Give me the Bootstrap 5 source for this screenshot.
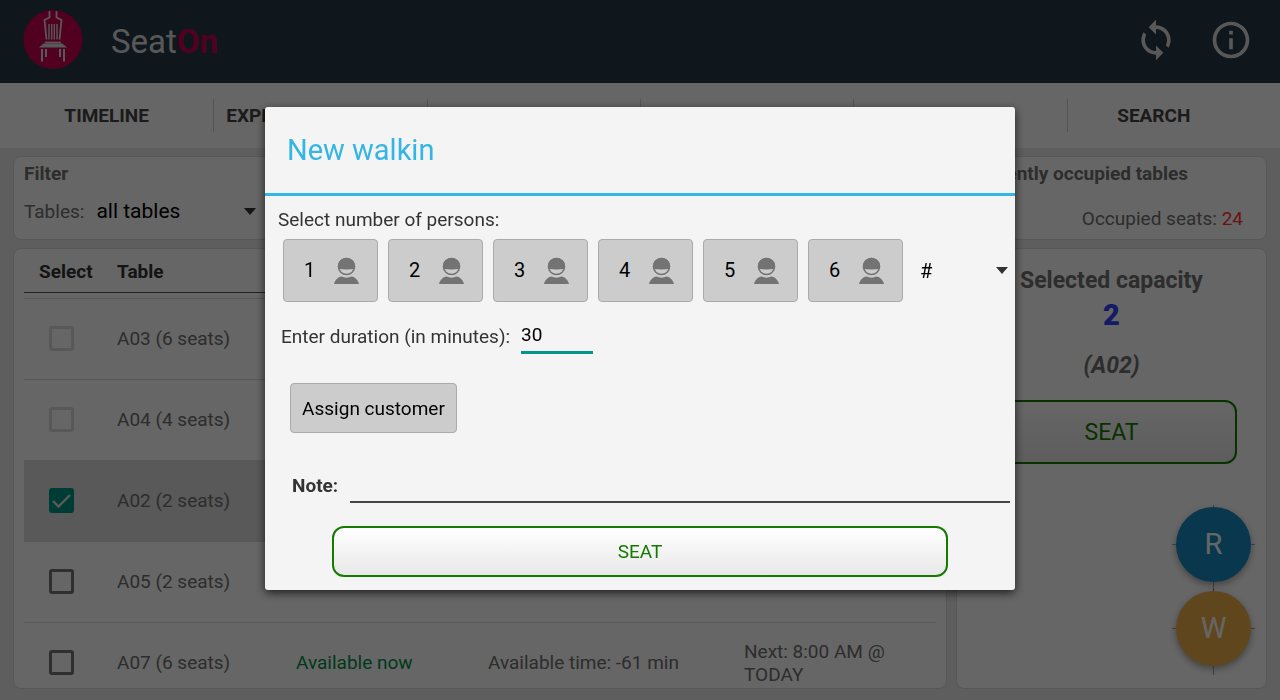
<!DOCTYPE html>
<html lang="en">
<head>
<meta charset="utf-8">
<meta name="viewport" content="width=device-width, initial-scale=1">
<title>SeatOn – New walkin</title>
<link href="https://cdn.jsdelivr.net/npm/bootstrap@5.3.0/dist/css/bootstrap.min.css" rel="stylesheet">
<style>
  body { font-family: Roboto, sans-serif; font-size: 19px; line-height: 23px; color: #707070; background: #ebebeb; }
  .topbar { background: #263946; height: 83px; padding: 0 27px 4px 23px; color: #dcdcdc; }
  .brand-name { font-size: 33px; line-height: 40px; margin-left: 28px; padding-top: 4px; }
  .brand-name b { color: #c80050; }
  .icon-btn { background: none; border: 0; padding: 0; color: #dcdcdc; line-height: 0; }
  .tabs { background: #fff; height: 65px; padding: 16px 0; }
  .tab-link { color: #444; font-weight: 700; text-decoration: none; line-height: 34px; text-align: center; white-space: nowrap; border-left: 1px solid #d4d4d4; }
  .tab-link:first-child { border-left: 0; }
  .tab-link:last-child { padding-right: 40px; }
  .content-area { padding: 8px 13px 11px; gap: 8px; min-height: 0; }
  .panel { background: #fff; border: 1px solid #dadada; border-radius: 8px; padding: 5px 10px; overflow: hidden; }
  .panel-title { font-size: 19px; line-height: 23px; font-weight: 700; margin: 0; }
  .filter-panel, .occupied-panel { height: 84px; }
  .occupied-panel .panel-title { padding-right: 68px; }
  .occupied-line { margin-top: 22px; padding-right: 13px; }
  .occupied-line span { color: #ff3333; }
  .side-panel { width: 311px; padding: 17px 15px 22px 29px; }
  .panels { gap: 9px; min-height: 0; }
  .plain-select { border: 0; background-color: transparent; --bs-form-select-bg-img: url("data:image/svg+xml,%3csvg xmlns='http://www.w3.org/2000/svg' viewBox='0 0 12 7'%3e%3cpath fill='%23333' d='M0 0h12L6 7z'/%3e%3c/svg%3e"); background-image: var(--bs-form-select-bg-img); background-size: 12px 7px; background-position: right 2px center; padding: 0 20px 0 0; color: #000; }
  .filter-select { font-size: 21px; line-height: 30px; width: 162px; margin-left: 12px; }
  .filter-row { margin-top: 11px; }
  .seat-table { table-layout: fixed; width: 100%; }
  .seat-table th { color: #333; height: 38px; padding-bottom: 3px; border-bottom: 1px solid #555; font-weight: 700; }
  .seat-table th:first-child { padding-left: 15px; }
  .seat-table tbody tr { height: 81px; border-top: 1px solid #dcdcdc; }
  .seat-table tbody tr.spacer-row { height: 6px; border: 0; }
  .seat-table .picked { background: #dedede; }
  .col-pick { width: 92px; } .col-name { width: 179px; } .col-state { width: 192px; } .col-time { width: 256px; }
  .tick { appearance: none; display: block; width: 25px; height: 25px; margin: 0 0 0 24px; border: 3px solid #757575; border-radius: 3px; }
  .tick:disabled { border-color: #dcdcdc; }
  .tick:checked { border-color: #009688; background: #009688 url("data:image/svg+xml,%3csvg xmlns='http://www.w3.org/2000/svg' viewBox='0 0 19 19'%3e%3cpath fill='none' stroke='%23e0e0e0' stroke-width='2.4' d='M1 10l5.500 5.500L18 4'/%3e%3c/svg%3e") center / 19px 19px no-repeat; }
  .free { color: #008f47; }
  .seat-btn { border: 2px solid #157b00; border-radius: 12px; background: linear-gradient(#fff, #e8e8e8); color: #157b00; }
  .side-panel .seat-btn { height: 64px; width: 251px; font-size: 23px; margin-top: 20px; }
  .capacity { font-size: 23px; line-height: 29px; font-weight: 700; }
  .capacity strong { font-size: 29px; line-height: 40px; color: #3341ff; }
  .side-text { width: 251px; text-align: center; }
  .fab { position: relative; width: 75px; height: 75px; border: 0; border-radius: 50%; color: #fff; font-size: 29px; box-shadow: 0 3px 7px rgba(0,0,0,.35); }
  .fab-r { background: #148ac2; } .fab-w { background: #eeb04a; }
  .fab::before, .fab::after { content: ""; position: absolute; z-index: -1; background: rgba(0,0,0,.35); }
  .fab::before { width: 1px; left: 37px; top: -2px; bottom: -9px; }
  .fab::after { height: 1px; top: 37px; left: -4px; right: -4px; }
  .fab-stack { gap: 9px; position: relative; z-index: 0; }
  .modal-backdrop { --bs-backdrop-opacity: .6; }
  .walkin { --bs-modal-width: 750px; }
  .walkin .modal-content { background: #f4f4f4; border: 0; border-radius: 3px; box-shadow: 0 3px 10px rgba(0,0,0,.7); color: #333; margin-bottom: 3px; }
  .walkin .modal-header { padding: 0 22px; height: 89px; border-bottom: 3px solid #33b5e5; border-radius: 0; }
  .walkin .modal-title { font-size: 29px; line-height: 36px; font-weight: 400; color: #33b5e5; }
  .walkin .modal-body { padding: 12px 5px 13px 13px; }
  .persons { gap: 10px; padding-left: 5px; margin-top: 8px; }
  .grey-btn { background: #ccc; border: 1px solid #aaa; border-radius: 4px; color: #000; }
  .person-btn { width: 95px; height: 63px; font-size: 20px; padding: 0 18px 0 20px; }
  .count-select { font-size: 20px; flex: 1; min-width: 0; padding-left: 7px; }
  .line-input { border: 0; background: transparent; padding: 0; outline: 0; height: 36px; color: #000; }
  .duration { width: 72px; border-bottom: 3px solid #009688; }
  .duration-row { margin: 16px 0 0 3px; gap: 11px; }
  .assign-btn { height: 50px; width: 167px; margin: 29px 0 0 12px; }
  .note-row { margin: 34px 0 0 14px; gap: 12px; }
  .note-input { border-bottom: 2px solid #444; }
  .modal-body .seat-btn { height: 51px; margin: 23px 62px 0 54px; }
</style>
</head>
<body>
<div class="d-flex flex-column vh-100 overflow-hidden">
  <header class="topbar d-flex align-items-center flex-shrink-0">
    <svg width="60" height="60" viewBox="0 0 60 60" aria-hidden="true">
      <circle cx="30" cy="29.500" r="29.500" fill="#cc0050"/>
      <g fill="none" stroke="#dcdcdc" stroke-width="1.800">
        <path d="M26.500 1v6.500l-5 2.500 2 19.500M33.500 1v6.500l5 2.500-2 19.500"/>
        <path d="M26 14v15.500M28.700 14v15.500M31.300 14v15.500M34 14v15.500" stroke-width="1.400"/>
        <path d="M22 32.500h16"/>
        <path d="M18.500 36.500l2.500-2h18l2.500 2z"/>
        <path d="M19 39v12.500M41 39v12.500M23 39v8M37 39v8" stroke-width="2"/>
      </g>
    </svg>
    <span class="brand-name">Seat<b>On</b></span>
    <div class="ms-auto d-flex" style="gap:31px">
      <button class="icon-btn" type="button" aria-label="Refresh"><svg width="44" height="44" viewBox="0 0 24 24" fill="currentColor"><path d="M12 4V1L8 5l4 4V6c3.310 0 6 2.690 6 6 0 1.010-.25 1.970-.7 2.800l1.460 1.460C19.540 15.030 20 13.570 20 12c0-4.420-3.580-8-8-8zm0 14c-3.310 0-6-2.690-6-6 0-1.010.25-1.970.7-2.800L5.240 7.740C4.460 8.970 4 10.430 4 12c0 4.420 3.580 8 8 8v3l4-4-4-4v3z"/></svg></button>
      <button class="icon-btn" type="button" aria-label="Info"><svg width="44" height="44" viewBox="0 0 24 24" fill="currentColor"><path d="M11 17h2v-6h-2v6zm1-15C6.480 2 2 6.480 2 12s4.480 10 10 10 10-4.480 10-10S17.520 2 12 2zm0 18c-4.410 0-8-3.590-8-8s3.590-8 8-8 8 3.590 8 8-3.590 8-8 8zM11 9h2V7h-2v2z"/></svg></button>
    </div>
  </header>
  <nav class="tabs d-flex flex-shrink-0" aria-label="Sections">
    <a class="tab-link col-2" href="#">TIMELINE</a>
    <a class="tab-link col-2 text-start ps-2" href="#"><span class="ps-1">EXPECTED</span></a>
    <a class="tab-link col-2" href="#" aria-label="Walkins"></a>
    <a class="tab-link col-2" href="#" aria-label="Reservations"></a>
    <a class="tab-link col-2" href="#" aria-label="Tables"></a>
    <a class="tab-link col-2" href="#">SEARCH</a>
  </nav>
  <main class="content-area d-flex flex-column flex-fill">
    <div class="d-flex flex-shrink-0 panels">
      <section class="panel filter-panel flex-fill">
        <h2 class="panel-title">Filter</h2>
        <div class="filter-row d-flex align-items-center">
          <label for="tables">Tables:</label>
          <select class="form-select plain-select filter-select" id="tables"><option>all tables</option></select>
        </div>
      </section>
      <section class="panel occupied-panel flex-fill text-end">
        <h2 class="panel-title">Currently occupied tables</h2>
        <div class="occupied-line">Occupied seats: <span>24</span></div>
      </section>
    </div>
    <div class="d-flex flex-fill panels">
      <section class="panel flex-fill">
        <table class="seat-table">
          <colgroup><col class="col-pick"><col class="col-name"><col class="col-state"><col class="col-time"><col></colgroup>
          <thead><tr><th>Select</th><th>Table</th><th></th><th></th><th></th></tr></thead>
          <tbody>
            <tr class="spacer-row"><td colspan="5"></td></tr>
            <tr><td><input class="tick" type="checkbox" id="a03" disabled></td><td><label for="a03">A03 (6 seats)</label></td><td></td><td></td><td></td></tr>
            <tr><td><input class="tick" type="checkbox" id="a04" disabled></td><td><label for="a04">A04 (4 seats)</label></td><td></td><td></td><td></td></tr>
            <tr class="picked"><td><input class="tick" type="checkbox" id="a02" checked></td><td><label for="a02">A02 (2 seats)</label></td><td></td><td></td><td></td></tr>
            <tr><td><input class="tick" type="checkbox" id="a05"></td><td><label for="a05">A05 (2 seats)</label></td><td></td><td></td><td></td></tr>
            <tr><td><input class="tick" type="checkbox" id="a07"></td><td><label for="a07">A07 (6 seats)</label></td><td class="free">Available now</td><td>Available time: -61 min</td><td>Next: 8:00 AM @ TODAY</td></tr>
          </tbody>
        </table>
      </section>
      <aside class="panel side-panel d-flex flex-column flex-shrink-0">
        <div class="side-text capacity">Selected capacity<br><strong>2</strong></div>
        <div class="side-text capacity fst-italic mt-3">(A02)</div>
        <button class="seat-btn flex-shrink-0" type="button">SEAT</button>
        <div class="fab-stack d-flex flex-column align-self-end mt-auto">
          <button class="fab fab-r" type="button">R</button>
          <button class="fab fab-w" type="button">W</button>
        </div>
      </aside>
    </div>
  </main>
</div>

<div class="modal-backdrop show"></div>
<div class="modal show d-block" role="dialog" aria-modal="true" aria-labelledby="walkin-title">
  <div class="modal-dialog modal-dialog-centered walkin">
    <form class="modal-content">
      <div class="modal-header"><h1 class="modal-title" id="walkin-title">New walkin</h1></div>
      <div class="modal-body d-flex flex-column">
        <div id="persons-label">Select number of persons:</div>
        <div class="persons d-flex align-items-center" role="group" aria-labelledby="persons-label">
          <button class="grey-btn person-btn d-flex align-items-center justify-content-between" type="button">1 <svg width="25" height="28" viewBox="0 0 25 28"><use href="#person"/></svg></button>
          <button class="grey-btn person-btn d-flex align-items-center justify-content-between" type="button">2 <svg width="25" height="28" viewBox="0 0 25 28"><use href="#person"/></svg></button>
          <button class="grey-btn person-btn d-flex align-items-center justify-content-between" type="button">3 <svg width="25" height="28" viewBox="0 0 25 28"><use href="#person"/></svg></button>
          <button class="grey-btn person-btn d-flex align-items-center justify-content-between" type="button">4 <svg width="25" height="28" viewBox="0 0 25 28"><use href="#person"/></svg></button>
          <button class="grey-btn person-btn d-flex align-items-center justify-content-between" type="button">5 <svg width="25" height="28" viewBox="0 0 25 28"><use href="#person"/></svg></button>
          <button class="grey-btn person-btn d-flex align-items-center justify-content-between" type="button">6 <svg width="25" height="28" viewBox="0 0 25 28"><use href="#person"/></svg></button>
          <select class="form-select plain-select count-select" aria-label="Other number of persons"><option>#</option></select>
        </div>
        <div class="duration-row d-flex align-items-center">
          <label for="duration">Enter duration (in minutes):</label>
          <input class="line-input duration" id="duration" type="text" inputmode="numeric" value="30">
        </div>
        <button class="grey-btn assign-btn align-self-start" type="button">Assign customer</button>
        <div class="note-row d-flex align-items-center">
          <label class="fw-bold" for="note">Note:</label>
          <input class="line-input note-input flex-fill" id="note" type="text">
        </div>
        <button class="seat-btn" type="button">SEAT</button>
      </div>
    </form>
  </div>
</div>

<svg width="0" height="0" class="position-absolute" aria-hidden="true">
  <symbol id="person" viewBox="0 0 25 28">
    <circle cx="12.500" cy="9.500" r="8" fill="#ccc" stroke="#737373" stroke-width="1.500"/>
    <path d="M3.800 9.500a8.700 8.700 0 0 1 17.400 0c0 1-.2 1.500-.4 2.300-5 1-11.600 1-16.600 0-.2-.8-.4-1.300-.4-2.300zM0 27c1-4 4-7 7.500-7.500 3 1.500 7 1.500 10 0C21 20 24 23 25 27z" fill="#737373"/>
  </symbol>
</svg>
<script src="https://cdn.jsdelivr.net/npm/bootstrap@5.3.0/dist/js/bootstrap.bundle.min.js"></script>
</body>
</html>
